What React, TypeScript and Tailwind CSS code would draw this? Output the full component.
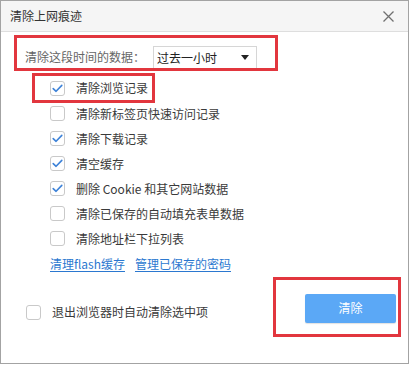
import React from 'react';

const FONT = { fontFamily: '"Noto Sans CJK SC", "Noto Sans", sans-serif' };

function Box({ checked }: { checked: boolean }) {
  return (
    <span className="flex h-[15px] w-[15px] shrink-0 items-center justify-center rounded-[3px] border border-[#c9c9c9] bg-white">
      {checked && (
        <svg width="11" height="9" viewBox="0 0 11 9" fill="none">
          <path d="M1.2 4.6 L4.1 7.3 L9.8 1.4" stroke="#3d82d8" strokeWidth="1.6" strokeLinecap="round" strokeLinejoin="round" />
        </svg>
      )}
    </span>
  );
}

const items: { label: string; checked: boolean }[] = [
  { label: '清除新标签页快速访问记录', checked: false },
  { label: '清除下载记录', checked: true },
  { label: '清空缓存', checked: true },
  { label: '删除 Cookie 和其它网站数据', checked: true },
  { label: '清除已保存的自动填充表单数据', checked: false },
  { label: '清除地址栏下拉列表', checked: false },
];

export default function App() {
  return (
    <div className="h-[365px] w-[410px] bg-white" style={FONT}>
      <div className="flex h-[364px] w-[409px] flex-col border border-[#a3a3a3] bg-white text-[12px] text-[#3a3a3a]">
        {/* title bar */}
        <div className="flex h-[31px] shrink-0 items-center justify-between border-b border-[#dedede] bg-[#f5f5f5] pl-[9px] pr-[14px]">
          <span className="text-[12px] text-[#333]">清除上网痕迹</span>
          <svg width="11" height="11" viewBox="0 0 11 11">
            <path d="M0.5 0.5 L10.5 10.5 M10.5 0.5 L0.5 10.5" stroke="#707070" strokeWidth="1.3" />
          </svg>
        </div>

        {/* time range */}
        <div className="ml-[13px] mt-[3px] flex h-[36px] w-[264px] items-stretch border-[3px] border-[#e2363e] pl-[8px] pt-[8px]">
          <span className="flex items-center text-[#666]">清除这段时间的数据：</span>
          <div className="ml-[8px] flex w-[104px] items-center justify-between border border-b-0 border-[#d6d6d6] bg-white pl-[3px] pr-[7px] text-[#222]">
            <span>过去一小时</span>
            <svg width="8" height="5" viewBox="0 0 8 5">
              <path d="M0 0 H8 L4 5 Z" fill="#222" />
            </svg>
          </div>
        </div>

        {/* first option */}
        <div className="ml-[31px] mt-[2px] flex h-[30px] w-[123px] items-center border-[3px] border-[#e2363e] pl-[15px]">
          <Box checked />
          <span className="ml-[11px]">清除浏览记录</span>
        </div>

        <div className="-mt-[2px] flex flex-col pl-[49px]">
          {items.map((it) => (
            <div key={it.label} className="flex h-[25px] items-center">
              <Box checked={it.checked} />
              <span className="ml-[11px]">{it.label}</span>
            </div>
          ))}
          <div className="flex h-[25px] items-center gap-[10px] text-[#2b78d0]">
            <span className="underline underline-offset-2">清理flash缓存</span>
            <span className="underline underline-offset-2">管理已保存的密码</span>
          </div>
        </div>

        {/* footer */}
        <div className="mt-[1px] flex items-start justify-between pl-[25px] pr-[7px]">
          <div className="mt-[26px] flex items-center">
            <Box checked={false} />
            <span className="ml-[11px]">退出浏览器时自动清除选中项</span>
          </div>
          <div className="flex h-[60px] w-[128px] items-center justify-end border-[3px] border-[#e2363e] pr-[2px]">
            <button className="mt-[2px] flex h-[29px] w-[91px] items-center justify-center rounded-[2px] bg-[#5ba8f6] text-[12px] text-white shadow-[0_1px_1px_rgba(0,0,0,0.12)]">
              清除
            </button>
          </div>
        </div>
      </div>
    </div>
  );
}
